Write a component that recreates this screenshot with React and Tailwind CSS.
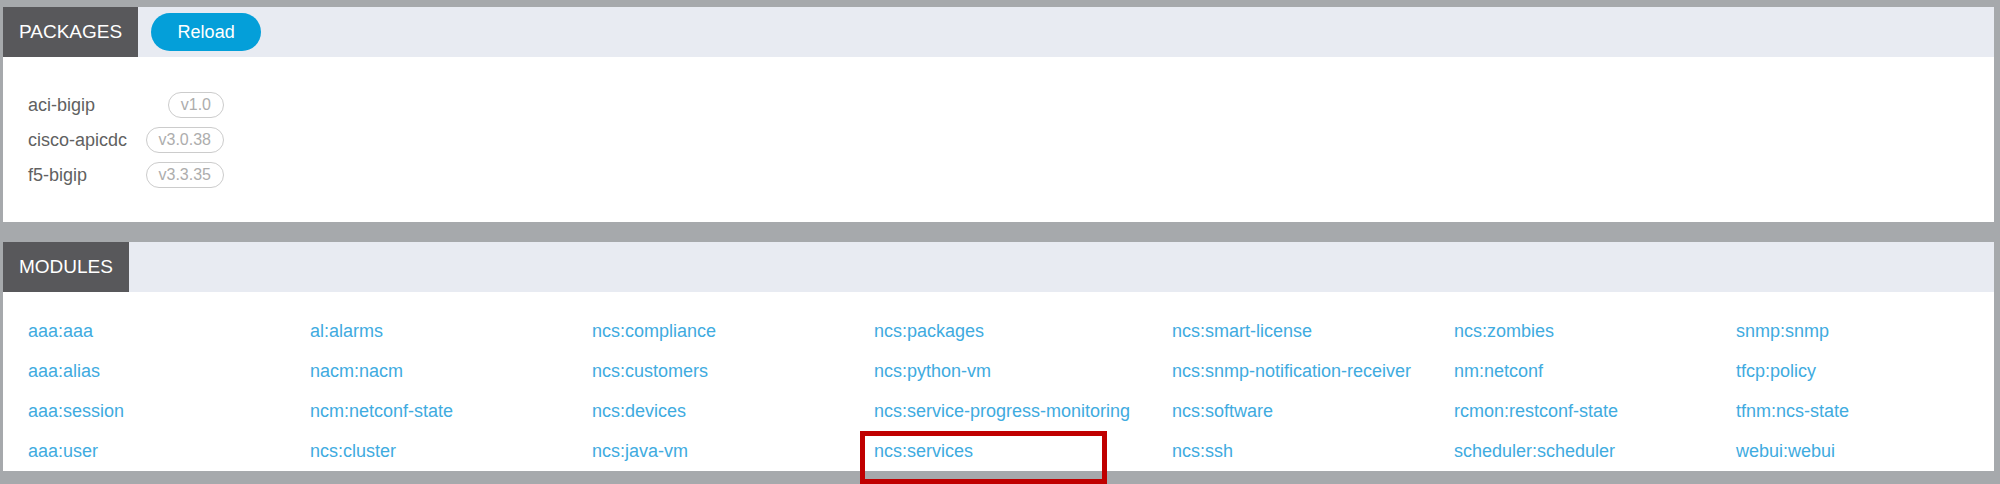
import React from 'react';

const packages = [
  { name: 'aci-bigip', version: 'v1.0' },
  { name: 'cisco-apicdc', version: 'v3.0.38' },
  { name: 'f5-bigip', version: 'v3.3.35' },
];

// laid out row by row, seven columns
const modules = [
  'aaa:aaa', 'al:alarms', 'ncs:compliance', 'ncs:packages', 'ncs:smart-license', 'ncs:zombies', 'snmp:snmp',
  'aaa:alias', 'nacm:nacm', 'ncs:customers', 'ncs:python-vm', 'ncs:snmp-notification-receiver', 'nm:netconf', 'tfcp:policy',
  'aaa:session', 'ncm:netconf-state', 'ncs:devices', 'ncs:service-progress-monitoring', 'ncs:software', 'rcmon:restconf-state', 'tfnm:ncs-state',
  'aaa:user', 'ncs:cluster', 'ncs:java-vm', 'ncs:services', 'ncs:ssh', 'scheduler:scheduler', 'webui:webui',
];

function PanelHeader({ title, children }) {
  return (
    <div className="flex h-[50px] items-center bg-[#e8ebf2]">
      <div className="flex h-full items-center bg-[#58585b] px-4 text-[19px] text-white">
        {title}
      </div>
      {children}
    </div>
  );
}

export default function App() {
  return (
    <div
      className="min-h-[484px] bg-[#a6a9ac] pt-[7px] pb-[13px] pl-[3px] pr-[6px]"
      style={{ fontFamily: '"Liberation Sans", Arial, sans-serif' }}
    >
      {/* Packages */}
      <section className="bg-white">
        <PanelHeader title="PACKAGES">
          <button className="ml-[13px] h-[38px] w-[110px] rounded-full bg-[#049fd9] text-[18px] text-white">
            Reload
          </button>
        </PanelHeader>
        <div className="pt-[30px] pb-[30px] pl-[25px]">
          {packages.map((p) => (
            <div key={p.name} className="flex h-[35px] items-center">
              <span className="w-[116px] text-[18px] leading-none text-[#616161]">{p.name}</span>
              <div className="flex w-[80px] justify-end">
                <span className="flex h-[26px] items-center rounded-full border border-[#cccccc] px-[12px] text-[16px] leading-none text-[#adadad]">
                  {p.version}
                </span>
              </div>
            </div>
          ))}
        </div>
      </section>

      {/* Modules */}
      <section className="mt-[20px] bg-white">
        <PanelHeader title="MODULES" />
        <div className="grid grid-cols-[282px_282px_282px_298px_282px_282px_1fr] pt-[19px] pl-[25px]">
          {modules.map((m) => (
            <div key={m} className="relative flex h-[40px] items-center">
              <a href="#" className="text-[18px] leading-none text-[#40abdf]">
                {m}
              </a>
              {m === 'ncs:services' && (
                <div className="pointer-events-none absolute left-[-14px] top-0 h-[53px] w-[247px] border-[5px] border-[#c00000]" />
              )}
            </div>
          ))}
        </div>
      </section>
    </div>
  );
}
